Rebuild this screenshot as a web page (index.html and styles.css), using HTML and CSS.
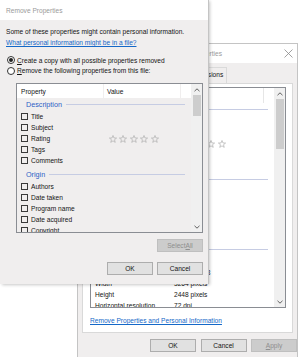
FILE: index.html
```html
<!DOCTYPE html>
<html>
<head>
<meta charset="utf-8">
<link rel="stylesheet" href="styles.css">
</head>
<body>
<div class="desk">

  <div class="win back">
    <div class="tbar">
      <span class="ttl">IMG_20170521.JPG Properties</span>
      <svg class="close" width="9" height="9" viewBox="0 0 9 9"><path d="M0.5 0.5L8.5 8.5M8.5 0.5L0.5 8.5" stroke="#8a8a8a" stroke-width="0.8" fill="none"/></svg>
    </div>
    <div class="tabs">
      <span class="tab">General</span><span class="tab">Security</span><span class="tab sel">Details</span><span class="tab">Previous Versions</span>
    </div>
    <div class="panel">
      <div class="lv lv-back">
        <div class="lv-main">
          <div class="hdr">
            <span class="hc hc-prop">Property</span><span class="hc hc-val">Value</span><span class="hc hc-fill"></span>
          </div>
          <div class="grp"><span class="gt">Description</span><span class="gl"></span></div>
          <div class="row"><span class="pc">Title</span><span class="vc"></span></div>
          <div class="row"><span class="pc">Subject</span><span class="vc"></span></div>
          <div class="row"><span class="pc">Rating</span><span class="vc stars">
            <svg viewBox="0 0 10 10"><path d="M5 0.6L6.2 3.7L9.5 3.8L6.9 5.9L7.8 9.2L5 7.3L2.2 9.2L3.1 5.9L0.5 3.8L3.8 3.7Z"/></svg>
            <svg viewBox="0 0 10 10"><path d="M5 0.6L6.2 3.7L9.5 3.8L6.9 5.9L7.8 9.2L5 7.3L2.2 9.2L3.1 5.9L0.5 3.8L3.8 3.7Z"/></svg>
            <svg viewBox="0 0 10 10"><path d="M5 0.6L6.2 3.7L9.5 3.8L6.9 5.9L7.8 9.2L5 7.3L2.2 9.2L3.1 5.9L0.5 3.8L3.8 3.7Z"/></svg>
            <svg viewBox="0 0 10 10"><path d="M5 0.6L6.2 3.7L9.5 3.8L6.9 5.9L7.8 9.2L5 7.3L2.2 9.2L3.1 5.9L0.5 3.8L3.8 3.7Z"/></svg>
            <svg viewBox="0 0 10 10"><path d="M5 0.6L6.2 3.7L9.5 3.8L6.9 5.9L7.8 9.2L5 7.3L2.2 9.2L3.1 5.9L0.5 3.8L3.8 3.7Z"/></svg>
          </span></div>
          <div class="row"><span class="pc">Tags</span><span class="vc"></span></div>
          <div class="row"><span class="pc">Comments</span><span class="vc"></span></div>
          <div class="grp g2"><span class="gt">Origin</span><span class="gl"></span></div>
          <div class="row"><span class="pc">Authors</span><span class="vc"></span></div>
          <div class="row"><span class="pc">Date taken</span><span class="vc"></span></div>
          <div class="row"><span class="pc">Program name</span><span class="vc"></span></div>
          <div class="row"><span class="pc">Date acquired</span><span class="vc"></span></div>
          <div class="row"><span class="pc">Copyright</span><span class="vc"></span></div>
          <div class="grp g2"><span class="gt">Image</span><span class="gl"></span></div>
          <div class="row"><span class="pc">Image ID</span><span class="vc"></span></div>
          <div class="row"><span class="pc">Dimensions</span><span class="vc">3264 x 2448</span></div>
          <div class="row"><span class="pc">Width</span><span class="vc">3264 pixels</span></div>
          <div class="row"><span class="pc">Height</span><span class="vc">2448 pixels</span></div>
          <div class="row"><span class="pc">Horizontal resolution</span><span class="vc">72 dpi</span></div>
        </div>
        <div class="sb sb-back">
          <span class="arr"><svg width="6" height="4" viewBox="0 0 6 4"><path d="M0.5 3.2L3 0.8L5.5 3.2" stroke="#606060" stroke-width="1" fill="none"/></svg></span>
          <span class="thumb"></span>
          <span class="track"></span>
          <span class="arr"><svg width="6" height="4" viewBox="0 0 6 4"><path d="M0.5 0.8L3 3.2L5.5 0.8" stroke="#606060" stroke-width="1" fill="none"/></svg></span>
        </div>
      </div>
      <a class="link link2" href="#">Remove Properties and Personal Information</a>
    </div>
    <div class="btns btns-back">
      <span class="btn">OK</span><span class="btn">Cancel</span><span class="btn dis"><u>A</u>pply</span>
    </div>
  </div>

  <div class="win front">
    <div class="tbar ftbar">Remove Properties</div>
    <div class="fbody">
      <p class="line">Some of these properties might contain personal information.</p>
      <a class="link line" href="#">What personal information might be in a file?</a>
      <div class="radios">
        <div class="radio on"><span class="rb"></span><span><u>C</u>reate a copy with all possible properties removed</span></div>
        <div class="radio"><span class="rb"></span><span><u>R</u>emove the following properties from this file:</span></div>
      </div>
      <div class="lv lv-front">
        <div class="lv-main">
          <div class="hdr">
            <span class="hc hc-prop">Property</span><span class="hc hc-val">Value</span><span class="hc hc-fill"></span>
          </div>
          <div class="grp"><span class="gt">Description</span><span class="gl"></span></div>
          <div class="row"><span class="pc"><span class="cb"></span>Title</span><span class="vc"></span></div>
          <div class="row"><span class="pc"><span class="cb"></span>Subject</span><span class="vc"></span></div>
          <div class="row"><span class="pc"><span class="cb"></span>Rating</span><span class="vc stars">
            <svg viewBox="0 0 10 10"><path d="M5 0.6L6.2 3.7L9.5 3.8L6.9 5.9L7.8 9.2L5 7.3L2.2 9.2L3.1 5.9L0.5 3.8L3.8 3.7Z"/></svg>
            <svg viewBox="0 0 10 10"><path d="M5 0.6L6.2 3.7L9.5 3.8L6.9 5.9L7.8 9.2L5 7.3L2.2 9.2L3.1 5.9L0.5 3.8L3.8 3.7Z"/></svg>
            <svg viewBox="0 0 10 10"><path d="M5 0.6L6.2 3.7L9.5 3.8L6.9 5.9L7.8 9.2L5 7.3L2.2 9.2L3.1 5.9L0.5 3.8L3.8 3.7Z"/></svg>
            <svg viewBox="0 0 10 10"><path d="M5 0.6L6.2 3.7L9.5 3.8L6.9 5.9L7.8 9.2L5 7.3L2.2 9.2L3.1 5.9L0.5 3.8L3.8 3.7Z"/></svg>
            <svg viewBox="0 0 10 10"><path d="M5 0.6L6.2 3.7L9.5 3.8L6.9 5.9L7.8 9.2L5 7.3L2.2 9.2L3.1 5.9L0.5 3.8L3.8 3.7Z"/></svg>
          </span></div>
          <div class="row"><span class="pc"><span class="cb"></span>Tags</span><span class="vc"></span></div>
          <div class="row"><span class="pc"><span class="cb"></span>Comments</span><span class="vc"></span></div>
          <div class="grp g2"><span class="gt">Origin</span><span class="gl"></span></div>
          <div class="row"><span class="pc"><span class="cb"></span>Authors</span><span class="vc"></span></div>
          <div class="row"><span class="pc"><span class="cb"></span>Date taken</span><span class="vc"></span></div>
          <div class="row"><span class="pc"><span class="cb"></span>Program name</span><span class="vc"></span></div>
          <div class="row"><span class="pc"><span class="cb"></span>Date acquired</span><span class="vc"></span></div>
          <div class="row"><span class="pc"><span class="cb"></span>Copyright</span><span class="vc"></span></div>
        </div>
        <div class="sb sb-front">
          <span class="arr"><svg width="6" height="4" viewBox="0 0 6 4"><path d="M0.5 3.2L3 0.8L5.5 3.2" stroke="#606060" stroke-width="1" fill="none"/></svg></span>
          <span class="thumb"></span>
          <span class="track"></span>
          <span class="arr"><svg width="6" height="4" viewBox="0 0 6 4"><path d="M0.5 0.8L3 3.2L5.5 0.8" stroke="#606060" stroke-width="1" fill="none"/></svg></span>
        </div>
      </div>
      <div class="btns btns-sel">
        <span class="btn dis">Select <u>A</u>ll</span>
      </div>
      <div class="btns btns-front">
        <span class="btn">OK</span><span class="btn">Cancel</span>
      </div>
    </div>
  </div>

</div>
</body>
</html>
```

FILE: styles.css
```css
* { box-sizing: border-box; }
html, body {
  margin: 0;
  padding: 0;
  background: #ffffff;
}
body {
  font-family: "Liberation Sans", Arial, sans-serif;
  font-size: 6.6px;
  color: #141414;
}
.desk {
  position: relative;
  width: 300px;
  height: 357px;
  overflow: hidden;
  background: #ffffff;
}
.win {
  position: absolute;
  background: #f0eeee;
  display: flex;
  flex-direction: column;
}
.back {
  left: 77px;
  top: 43px;
  width: 221px;
  height: 330px;
  border: 1px solid #c4c4c4;
}
.front {
  left: 0;
  top: 0;
  width: 208px;
  height: 284px;
  box-shadow: 1px 0 0 #c4c4c4, 2px 1px 3px rgba(0, 0, 0, 0.22);
}
.tbar {
  height: 19px;
  flex: none;
  background: #ffffff;
  color: #9a9a9a;
  display: flex;
  align-items: center;
}
.back .tbar { padding-left: 6px; }
.ttl {
  width: 138px;
  text-align: right;
  white-space: nowrap;
}
.close { margin-left: auto; margin-right: 4px; }
.ftbar {
  height: 20px;
  padding-left: 6px;
  padding-top: 1px;
}
.tabs {
  height: 20px;
  flex: none;
  display: flex;
  align-items: flex-end;
  padding-left: 0;
}
.tab {
  height: 16px;
  line-height: 14px;
  padding: 0 3px;
  border: 1px solid #dadada;
  border-bottom: none;
  margin-right: -1px;
  white-space: nowrap;
  color: #141414;
}
.tab.sel {
  height: 18px;
  line-height: 16px;
  background: #ffffff;
}
.panel {
  margin-left: 4px;
  width: 211px;
  height: 250px;
  flex: none;
  background: #ffffff;
  border: 1px solid #d9d9d9;
  padding: 3px 0 0 7px;
  display: flex;
  flex-direction: column;
  align-items: flex-start;
}
.link {
  color: #1468c8;
  text-decoration: underline;
  white-space: nowrap;
}
.link2 {
  margin-top: 7px;
  line-height: 11px;
}

/* list views */
.lv {
  border: 1px solid #8a8d93;
  display: flex;
  overflow: hidden;
  flex: none;
}
.lv-main {
  flex: 1;
  min-width: 0;
  display: flex;
  flex-direction: column;
  overflow: hidden;
}
.lv-back {
  width: 196px;
  height: 221px;
  background: #ffffff;
}
.lv-front {
  width: 187px;
  height: 150px;
  margin-left: 10px;
  margin-top: 7px;
  background: #f0eeee;
}
.hdr {
  display: flex;
  flex: none;
  gap: 1px;
}
.lv-front .hdr { height: 14px; }
.lv-back .hdr { height: 15px; background: #e6e6e6; }
.hc {
  background: #ffffff;
  display: flex;
  align-items: center;
  padding-left: 4px;
  white-space: nowrap;
}
.lv-front .hc-prop { width: 86px; }
.lv-front .hc-val { width: 76px; padding-left: 3px; }
.lv-back .hc-prop { width: 79px; }
.lv-back .hc-val { width: 92px; padding-left: 3px; }
.hc-fill { flex: 1; }

.grp {
  height: 13px;
  flex: none;
  display: flex;
  align-items: center;
  padding-left: 9px;
  padding-right: 6px;
  color: #2d5fc6;
  font-size: 7.2px;
}
.g2 { margin-top: 2px; }
.gl {
  flex: 1;
  height: 1px;
  background: #c6cce3;
  margin-left: 4px;
}
.row {
  height: 11px;
  flex: none;
  display: flex;
  align-items: center;
  white-space: nowrap;
}
.pc {
  display: flex;
  align-items: center;
  flex: none;
}
.lv-front .pc { width: 87px; padding-left: 4px; }
.lv-back .pc { width: 80px; padding-left: 4px; }
.vc {
  display: flex;
  align-items: center;
  padding-left: 3px;
}
.cb {
  width: 7px;
  height: 7px;
  border: 1px solid #3a3a3a;
  margin-right: 3px;
  flex: none;
}
.stars {
  gap: 2.5px;
  padding-left: 4.5px;
}
.stars svg {
  width: 8px;
  height: 8px;
  fill: none;
  stroke: #a9a9a9;
  stroke-width: 0.8;
}

/* scrollbars */
.sb {
  width: 11px;
  flex: none;
  display: flex;
  flex-direction: column;
  align-items: center;
  background: #f0f0f0;
}
.arr {
  height: 11px;
  flex: none;
  display: flex;
  align-items: center;
  justify-content: center;
}
.thumb {
  width: 8px;
  background: #cdcdcd;
  flex: none;
}
.sb-front .thumb { height: 21px; }
.sb-back .thumb { height: 50px; }
.track { flex: 1; }

/* front dialog body */
.fbody {
  flex: 1;
  padding: 6px 5px 0 6px;
  display: flex;
  flex-direction: column;
  align-items: flex-start;
}
.line {
  margin: 0;
  line-height: 11px;
  white-space: nowrap;
}
.radios {
  margin-top: 7px;
  display: flex;
  flex-direction: column;
}
.radio {
  height: 10.5px;
  display: flex;
  align-items: center;
  gap: 2px;
  white-space: nowrap;
  margin-left: 1px;
}
.rb {
  width: 8px;
  height: 8px;
  border: 1px solid #333333;
  border-radius: 50%;
  display: flex;
  align-items: center;
  justify-content: center;
  background: #ffffff;
}
.radio.on .rb::after {
  content: "";
  width: 4px;
  height: 4px;
  border-radius: 50%;
  background: #222222;
}

/* buttons */
.btns {
  display: flex;
  gap: 4px;
  align-self: flex-end;
}
.btns-sel { margin-top: 6px; }
.btns-front { margin-top: 10px; }
.btns-back {
  margin-top: 6px;
  margin-left: 72px;
  align-self: flex-start;
  gap: 4.5px;
}
.btn {
  width: 46px;
  height: 13px;
  border: 1px solid #adadad;
  background: #e1e1e1;
  display: flex;
  align-items: center;
  justify-content: center;
  color: #141414;
}
.btn.dis {
  background: #cccccc;
  border-color: #bfbfbf;
  color: #8f8f8f;
}
u { text-decoration: underline; }
```
